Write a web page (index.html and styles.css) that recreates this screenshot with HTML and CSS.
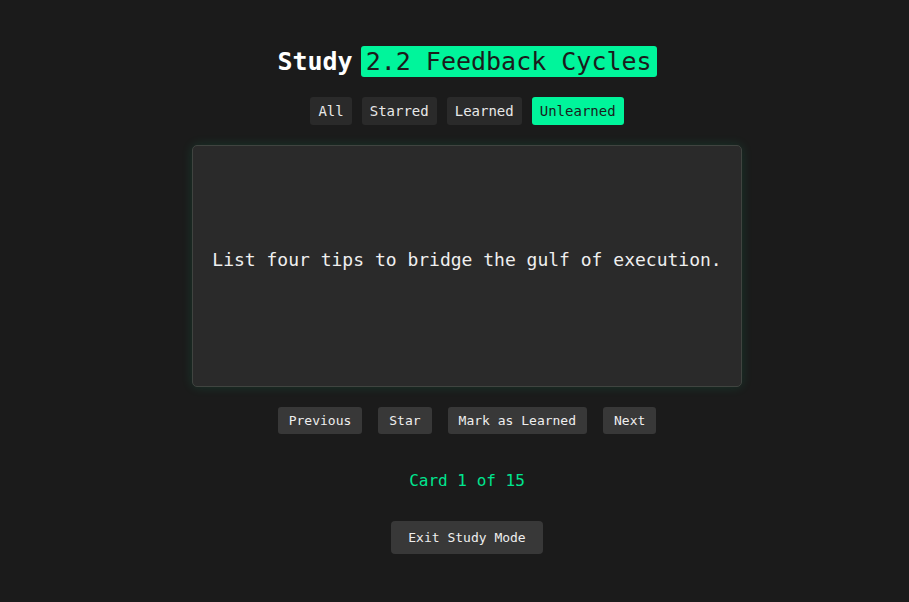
FILE: index.html
```html
<!DOCTYPE html>
<html lang="en">
<head>
<meta charset="utf-8">
<title>Study 2.2 Feedback Cycles</title>
<link rel="stylesheet" href="styles.css">
</head>
<body>
<main class="study">
  <h1 class="title">Study <span class="title-badge">2.2 Feedback Cycles</span></h1>
  <div class="filters">
    <button class="filter">All</button>
    <button class="filter">Starred</button>
    <button class="filter">Learned</button>
    <button class="filter filter-active">Unlearned</button>
  </div>
  <section class="card">
    <p class="card-text">List four tips to bridge the gulf of execution.</p>
  </section>
  <div class="nav">
    <button class="nav-btn">Previous</button>
    <button class="nav-btn">Star</button>
    <button class="nav-btn">Mark as Learned</button>
    <button class="nav-btn">Next</button>
  </div>
  <p class="count">Card 1 of 15</p>
  <button class="exit-btn">Exit Study Mode</button>
</main>
</body>
</html>
```
FILE: styles.css
```css
html, body {
  margin: 0;
  padding: 0;
  background: #1b1b1b;
  height: 100%;
}
body {
  font-family: "DejaVu Sans Mono", "Liberation Mono", monospace;
  color: #ececec;
  overflow: hidden;
}
.study {
  display: flex;
  flex-direction: column;
  align-items: center;
  padding: 46px 0 0 25px;
}
.title {
  margin: 0;
  display: flex;
  align-items: center;
  gap: 8px;
  font-size: 25px;
  line-height: 31px;
  font-weight: bold;
  color: #ffffff;
}
.title-badge {
  background: #00f59b;
  color: #1b1b1b;
  font-weight: normal;
  padding: 0 5px;
  border-radius: 3px;
}
.filters {
  display: flex;
  gap: 10px;
  margin-top: 20px;
}
button {
  font-family: inherit;
  border: none;
  cursor: pointer;
}
.filter {
  background: #2a2a2a;
  color: #e8e8e8;
  font-size: 14px;
  line-height: 20px;
  padding: 4px 8px;
  border-radius: 3px;
}
.filter-active {
  background: #00f59b;
  color: #1b1b1b;
}
.card {
  margin-top: 20px;
  width: 550px;
  height: 242px;
  box-sizing: border-box;
  background: #2a2a2a;
  border: 1px solid #404440;
  border-radius: 5px;
  box-shadow: 0 0 12px rgba(0, 245, 155, 0.12);
  display: flex;
  align-items: center;
  justify-content: center;
  padding-bottom: 12px;
}
.card-text {
  margin: 0;
  font-size: 18px;
  line-height: 22px;
  color: #efefef;
}
.nav {
  display: flex;
  gap: 16px;
  margin-top: 20px;
}
.nav-btn {
  background: #383838;
  color: #eeeeee;
  font-size: 13px;
  line-height: 17px;
  padding: 5px 11px;
  border-radius: 3px;
}
.count {
  margin: 37px 0 0;
  font-size: 16px;
  line-height: 20px;
  color: #00e58f;
}
.exit-btn {
  margin-top: 30px;
  background: #383838;
  color: #eeeeee;
  font-size: 13px;
  line-height: 17px;
  padding: 8px 17px;
  border-radius: 4px;
}
```
